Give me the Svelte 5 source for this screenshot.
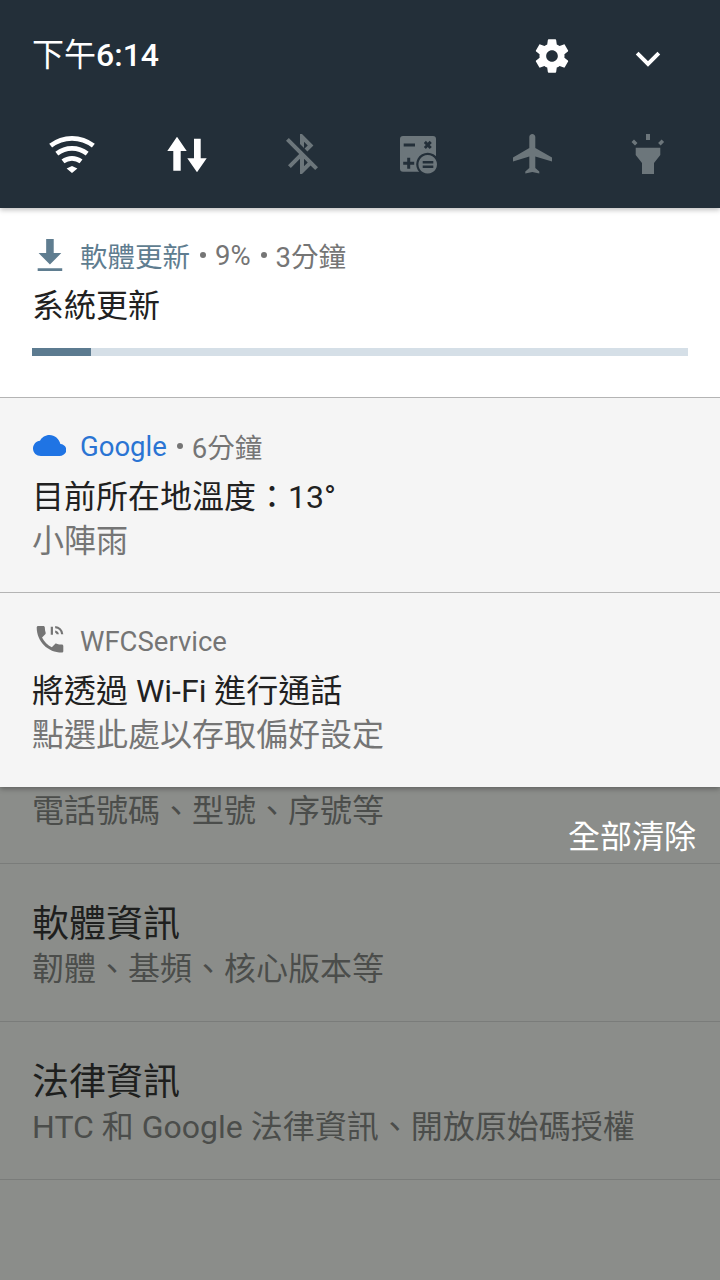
<script>
  // wifi is four concentric bands around the bottom point
  function band(r1, r2) {
    const s = 0.616, c = 0.788, cx = 24, cy = 44;
    return `M${cx - r2 * s} ${cy - r2 * c}A${r2} ${r2} 0 0 1 ${cx + r2 * s} ${cy - r2 * c}L${cx + r1 * s} ${cy - r1 * c}A${r1} ${r1} 0 0 0 ${cx - r1 * s} ${cy - r1 * c}Z`;
  }

  const wifi = band(32.3, 37) + band(22.3, 27) + band(12.3, 17) + 'M24 37 29.400 39.500 24 44 18.600 39.500Z';

  const quick = [
    { name: 'wifi', on: true, vb: '0 0 48 48', d: wifi },
    { name: 'data', on: true, vb: '0 0 48 48', d: 'M14 7.700 23.700 22H17.700V41.700H10.300V22H4.300ZM31 9.700H37.700V29.300H43.700L34 43.300 24.300 29.300H31Z' },
    { name: 'bluetooth', on: false, vb: '0 -0.5 24 24', d: 'M13 5.830l1.880 1.880-1.600 1.600 1.410 1.410 3.020-3.020L12 2h-1v5.030l2 2zM5.410 4 4 5.410 10.590 12 5 17.590 6.410 19 11 14.410V22h1l4.290-4.290 2.300 2.290L20 18.590 5.410 4zM13 18.170v-3.760l1.880 1.880L13 18.170z' },
    { name: 'calc', on: false, vb: '0 0 48 48', d: 'M9 7H39A3 3 0 0 1 42 10V39.700A3 3 0 0 1 39 42.700H9A3 3 0 0 1 6 39.700V10A3 3 0 0 1 9 7Z', cut: 'M9.700 14.500H21V17.500H9.700ZM29.800 13.900 31.900 11.800 33.700 13.800 35.700 11.800 37.800 13.900 35.800 16 37.800 18 35.700 20.100 33.700 18.100 31.900 20.100 29.800 18 31.800 16ZM13.200 28.800H16.200V32.800H20.200V35.800H16.200V39.800H13.200V35.800H9.200V32.800H13.200ZM33.700 23.800A11.500 11.500 0 1 1 33.699 23.800Z', top: 'M33.700 26A9.300 9.300 0 1 1 33.699 26ZM28.700 32.100V34.600H39.300V32.100ZM28.700 36.400V38.900H39.300V36.400Z' },
    { name: 'plane', on: false, vb: '0 0 48 48', d: 'M23.300 5C21.600 5 20.300 6.400 20.300 8V19L4 28.500V32.500L20.300 27.500V39L16.300 42.500V44.500L23.300 43 30.300 44.500V42.500L26.300 39V27.500L43 32.500V28.500L26.300 19V8C26.300 6.400 25 5 23.300 5Z' },
    { name: 'flash', on: false, vb: '0 0 48 48', d: 'M22 5H26V11H22ZM7.500 13 10 10.500 13.500 14 11 16.500ZM40.100 13 37.600 10.500 34.100 14 36.600 16.500ZM11.700 18.700H36.300V26L30 34V45H18V34L11.700 26Z' }
  ];

  const settings = [
    { title: '電話號碼、型號、序號等', partial: true },
    { title: '軟體資訊', sub: '韌體、基頻、核心版本等' },
    { title: '法律資訊', sub: 'HTC 和 Google 法律資訊、開放原始碼授權' }
  ];
</script>

<div class="screen">
  <header class="shade">
    <div class="top">
      <div class="clock">下午<b>6:14</b></div>
      <svg class="gear" viewBox="0 0 24 24"><path d="M19.430 12.980c.04-.32.07-.64.07-.98s-.03-.66-.07-.98l2.110-1.650c.19-.15.24-.42.12-.64l-2-3.460c-.12-.22-.39-.3-.61-.22l-2.490 1c-.52-.4-1.080-.73-1.690-.98l-.38-2.650C14.460 2.180 14.250 2 14 2h-4c-.25 0-.46.18-.49.42l-.38 2.650c-.61.25-1.170.59-1.690.98l-2.490-1c-.23-.09-.49 0-.61.22l-2 3.460c-.13.22-.07.49.12.64l2.110 1.650c-.04.32-.07.65-.07.98s.03.66.07.98l-2.110 1.650c-.19.15-.24.42-.12.64l2 3.460c.12.22.39.3.61.22l2.490-1c.52.4 1.080.73 1.690.98l.38 2.650c.03.24.24.42.49.42h4c.25 0 .46-.18.49-.42l.38-2.650c.61-.25 1.170-.59 1.690-.98l2.490 1c.23.09.49 0 .61-.22l2-3.460c.12-.22.07-.49-.12-.64l-2.110-1.650zM12 15.500c-1.930 0-3.500-1.570-3.500-3.500s1.570-3.500 3.500-3.500 3.500 1.570 3.500 3.500-1.570 3.500-3.500 3.500z" /></svg>
      <svg class="chevron" viewBox="0 0 24 24"><path d="M2 7.500 12 17.500 22 7.500" /></svg>
    </div>
    <div class="quick">
      {#each quick as q}
        <svg class="tile" class:on={q.on} viewBox={q.vb} aria-label={q.name}>
          <path d={q.d} />
          {#if q.cut}
            <path class="cut" d={q.cut} />
            <path d={q.top} fill-rule="evenodd" />
          {/if}
        </svg>
      {/each}
    </div>
  </header>

  <div class="panel">
    <section class="note first">
      <div class="meta">
        <svg class="ico" viewBox="-1 0 32 36"><path class="slate" d="M12 1h8v15h8L16 28 4 16h8zM3 32h26v3H3z" /></svg>
        <span class="slate-text">軟體更新</span><i class="dot"></i><span>9%</span><i class="dot"></i><span>3分鐘</span>
      </div>
      <div class="title">系統更新</div>
      <div class="track"><div class="fill" style="width: 9%"></div></div>
    </section>

    <section class="note">
      <div class="meta">
        <svg class="ico" viewBox="-1 0 34 24"><path class="blue" d="M27.400 10.100C26.300 4.800 21.600 1 16.500 1c-4.100 0-7.700 2.300-9.500 5.700C3 7.100 0 10.500 0 14.500 0 18.900 3.500 22 7.900 22h18.500c3.800 0 7-2.600 7-6 0-3.300-2.800-5.700-6-5.900z" /></svg>
        <span class="blue-text">Google</span><i class="dot"></i><span>6分鐘</span>
      </div>
      <div class="title">目前所在地溫度：13°</div>
      <div class="sub">小陣雨</div>
    </section>

    <section class="note last">
      <div class="meta">
        <svg class="ico" viewBox="-0.180 1.650 23 23"><path class="grey" d="M6.620 10.790c1.440 2.830 3.760 5.140 6.590 6.590l2.200-2.200c.27-.27.67-.36 1.020-.24 1.120.37 2.330.57 3.570.57.55 0 1 .45 1 1V20c0 .55-.45 1-1 1-9.390 0-17-7.610-17-17 0-.55.45-1 1-1h3.500c.55 0 1 .45 1 1 0 1.250.2 2.450.57 3.570.11.35.03.74-.25 1.020l-2.200 2.200zM12.500 3.500h1.500v5.500h-1.500zM15.500 3A6 6 0 0 1 21 8.500h-1.500A4.500 4.500 0 0 0 15.500 4.500zM15.500 6A3 3 0 0 1 18 8.500h-1.500A1.500 1.500 0 0 0 15.500 7.500z" /></svg>
        <span>WFCService</span>
      </div>
      <div class="title">將透過 Wi-Fi 進行通話</div>
      <div class="sub">點選此處以存取偏好設定</div>
    </section>
  </div>

  <main class="behind">
    <button class="clear">全部清除</button>
    {#each settings as row}
      <div class="row" class:partial={row.partial}>
        {#if row.partial}
          <div class="rsub">{row.title}</div>
        {:else}
          <div class="rtitle">{row.title}</div>
          <div class="rsub">{row.sub}</div>
        {/if}
      </div>
    {/each}
  </main>
</div>

<style>
  :global(body) {
    margin: 0;
    background: #8b8d8a;
  }

  .screen {
    position: relative;
    width: 720px;
    height: 1280px;
    overflow: hidden;
    font-family: Roboto, "Noto Sans CJK TC", sans-serif;
    background: #8b8d8a;
  }

  .shade {
    height: 208px;
    background: #232f39;
    box-sizing: border-box;
    position: relative;
    z-index: 3;
    box-shadow: 0 2px 5px rgba(0, 0, 0, 0.25);
  }

  .top {
    display: flex;
    align-items: center;
    height: 110px;
    padding-left: 32px;
  }

  .clock {
    flex: 1;
    color: #fff;
    font-size: 32px;
    line-height: 40px;
    margin-top: -1px;
  }

  .clock b {
    font-weight: 500;
  }

  .gear {
    width: 40px;
    height: 40px;
    fill: #fff;
    margin-right: 63px;
    margin-top: 1px;
  }

  .chevron {
    width: 26px;
    height: 26px;
    fill: none;
    stroke: #fff;
    stroke-width: 3.6;
    margin-right: 59px;
    margin-top: 5px;
  }

  .quick {
    display: flex;
    justify-content: space-between;
    padding: 0 48px;
    margin-top: 19px;
  }

  .tile {
    width: 48px;
    height: 48px;
    fill: #6c767b;
  }

  .tile.on {
    fill: #fff;
  }

  .tile .cut {
    fill: #232f39;
  }

  .panel {
    position: relative;
    z-index: 2;
    box-shadow: 0 2px 5px rgba(0, 0, 0, 0.3);
  }

  .note {
    height: 195px;
    box-sizing: border-box;
    background: #f5f5f5;
    border-top: 1px solid #b4b4b4;
    padding: 30px 32px 0;
  }

  .note.first {
    height: 189px;
    background: #fff;
    border-top: 0;
    padding-top: 29px;
  }

  .note.last {
    padding-top: 30px;
  }

  .meta {
    display: flex;
    align-items: center;
    height: 36px;
    font-size: 27.5px;
    color: #757575;
  }

  .ico {
    width: 34px;
    height: 34px;
    margin-right: 14px;
    flex: none;
  }

  .slate { fill: #5f7d90; }
  .blue { fill: #1f74e4; }
  .grey { fill: #757575; }
  .slate-text { color: #5f7d90; }
  .blue-text { color: #2a74d3; }

  .dot {
    width: 6px;
    height: 6px;
    margin: 0 9px 0 10px;
    border-radius: 50%;
    background: #757575;
  }

  .title {
    font-size: 32px;
    line-height: 44px;
    margin-top: 11px;
    color: #212121;
  }

  .last .title {
    margin-top: 10px;
  }

  .sub {
    font-size: 32px;
    line-height: 44px;
    color: #757575;
  }

  .track {
    height: 8px;
    margin-top: 20px;
    background: #d5dfe7;
  }

  .fill {
    height: 100%;
    background: #5c7b90;
  }

  .behind {
    position: relative;
    color: #4b4d4b;
  }

  .clear {
    position: absolute;
    top: 28px;
    right: 24px;
    padding: 0;
    border: 0;
    background: none;
    color: #fff;
    font: inherit;
    font-size: 32px;
    line-height: 44px;
  }

  .row {
    height: 158px;
    box-sizing: border-box;
    padding: 36px 32px 0;
    border-bottom: 1px solid #7a7c7a;
  }

  .row.partial {
    height: 77px;
    padding-top: 2px;
  }

  .rtitle {
    font-size: 37px;
    line-height: 50px;
    color: #1e1f1e;
  }

  .rsub {
    font-size: 32px;
    line-height: 44px;
    margin-top: -3px;
    color: #4b4d4b;
  }

  .row.partial .rsub {
    margin-top: 0;
  }
</style>
